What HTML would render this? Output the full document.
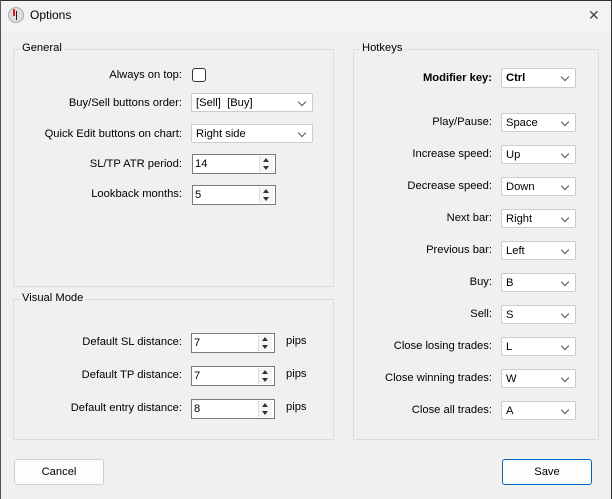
<!DOCTYPE html><html><head><style>
body{margin:0;width:612px;height:499px;background:#f0f0f0;font-family:"Liberation Sans",sans-serif;font-size:11.2px;color:#000;position:relative;overflow:hidden}
.a{position:absolute}
.tb{left:0;top:0;width:612px;height:31px;background:#f3f3f3;border-top:1px solid #333}
.grp{position:absolute;border:1px solid #dcdcdc;}
.gl{position:absolute;top:-8px;left:6px;background:#f0f0f0;padding:0 2px}
.lbl{position:absolute;text-align:right;line-height:16px}
.cb{position:absolute;height:19px;background:#fff;border:1px solid #ccc;box-sizing:border-box;line-height:18px;padding-left:4px;border-radius:2px}
.cb:after{content:"";position:absolute;right:7px;top:5px;width:5px;height:5px;border-right:1px solid #555;border-bottom:1px solid #555;transform:rotate(45deg)}
.sp{position:absolute;height:20px;width:84px;background:#fff;border:1px solid #7a7a7a;box-sizing:border-box;line-height:18px;padding-left:2px}
.sp i{position:absolute;right:2px;top:1px;width:13px;height:16px;background:#f5f5f5;border-left:1px solid #ddd}
.sp i:before{content:"";position:absolute;left:3px;top:2px;border:3px solid transparent;border-bottom:4px solid #333;border-top:0}
.sp i:after{content:"";position:absolute;left:3px;top:10px;border:3px solid transparent;border-top:4px solid #333;border-bottom:0}
.btn{position:absolute;width:90px;height:26px;box-sizing:border-box;border:1px solid #d0d0d0;background:#fdfdfd;border-radius:3px;text-align:center;line-height:24px}
</style></head><body>
<div class="a tb"></div>
<div class="a" style="left:0;top:0;width:1px;height:499px;background:#555"></div>
<div class="a" style="right:0;top:0;width:1px;height:499px;background:#333"></div>
<div class="a" style="left:8px;top:7px;width:14px;height:14px;border-radius:50%;background:#ddd;border:1px solid #aaa"></div>
<div class="a" style="left:13px;top:9px;width:2px;height:7px;background:#d22"></div>
<div class="a" style="left:16px;top:11px;width:1px;height:9px;background:#222"></div>
<div class="a" style="left:30px;top:8px;font-size:12px">Options</div>
<div class="a" style="left:588px;top:7px;font-size:14px;color:#444;font-weight:normal">✕</div>

<div class="grp" style="left:13px;top:49px;width:319px;height:236px"><span class="gl">General</span></div>
<div class="grp" style="left:13px;top:299px;width:319px;height:139px"><span class="gl">Visual Mode</span></div>
<div class="grp" style="left:353px;top:49px;width:244px;height:389px"><span class="gl">Hotkeys</span></div>

<div class="lbl" style="right:430px;top:67px">Always on top:</div>
<div class="a" style="left:192px;top:68px;width:12px;height:12px;border:1px solid #333;border-radius:3px;background:#fff"></div>
<div class="lbl" style="right:430px;top:95px">Buy/Sell buttons order:</div>
<div class="cb" style="left:191px;top:93px;width:122px">[Sell]&nbsp; [Buy]</div>
<div class="lbl" style="right:430px;top:126px">Quick Edit buttons on chart:</div>
<div class="cb" style="left:191px;top:124px;width:122px">Right side</div>
<div class="lbl" style="right:430px;top:156px">SL/TP ATR period:</div>
<div class="sp" style="left:192px;top:154px">14<i></i></div>
<div class="lbl" style="right:430px;top:186px">Lookback months:</div>
<div class="sp" style="left:192px;top:185px">5<i></i></div>

<div class="lbl" style="right:430px;top:334px">Default SL distance:</div>
<div class="sp" style="left:191px;top:333px">7<i></i></div><div class="a" style="left:286px;top:335px">pips</div>
<div class="lbl" style="right:430px;top:367px">Default TP distance:</div>
<div class="sp" style="left:191px;top:366px">7<i></i></div><div class="a" style="left:286px;top:368px">pips</div>
<div class="lbl" style="right:430px;top:400px">Default entry distance:</div>
<div class="sp" style="left:191px;top:399px">8<i></i></div><div class="a" style="left:286px;top:401px">pips</div>

<div class="lbl" style="right:120px;top:70px;font-weight:bold">Modifier key:</div>
<div class="cb" style="left:501px;top:68px;width:75px;height:20px;font-weight:bold">Ctrl</div>
<div class="lbl" style="right:120px;top:114px">Play/Pause:</div><div class="cb" style="left:501px;top:113px;width:75px">Space</div>
<div class="lbl" style="right:120px;top:146px">Increase speed:</div><div class="cb" style="left:501px;top:145px;width:75px">Up</div>
<div class="lbl" style="right:120px;top:178px">Decrease speed:</div><div class="cb" style="left:501px;top:177px;width:75px">Down</div>
<div class="lbl" style="right:120px;top:210px">Next bar:</div><div class="cb" style="left:501px;top:209px;width:75px">Right</div>
<div class="lbl" style="right:120px;top:242px">Previous bar:</div><div class="cb" style="left:501px;top:241px;width:75px">Left</div>
<div class="lbl" style="right:120px;top:274px">Buy:</div><div class="cb" style="left:501px;top:273px;width:75px">B</div>
<div class="lbl" style="right:120px;top:306px">Sell:</div><div class="cb" style="left:501px;top:305px;width:75px">S</div>
<div class="lbl" style="right:120px;top:338px">Close losing trades:</div><div class="cb" style="left:501px;top:337px;width:75px">L</div>
<div class="lbl" style="right:120px;top:370px">Close winning trades:</div><div class="cb" style="left:501px;top:369px;width:75px">W</div>
<div class="lbl" style="right:120px;top:402px">Close all trades:</div><div class="cb" style="left:501px;top:401px;width:75px">A</div>

<div class="btn" style="left:14px;top:459px">Cancel</div>
<div class="btn" style="left:502px;top:459px;border:1px solid #0067c0;box-shadow:inset 0 0 0 1px #fff">Save</div>
</body></html>
